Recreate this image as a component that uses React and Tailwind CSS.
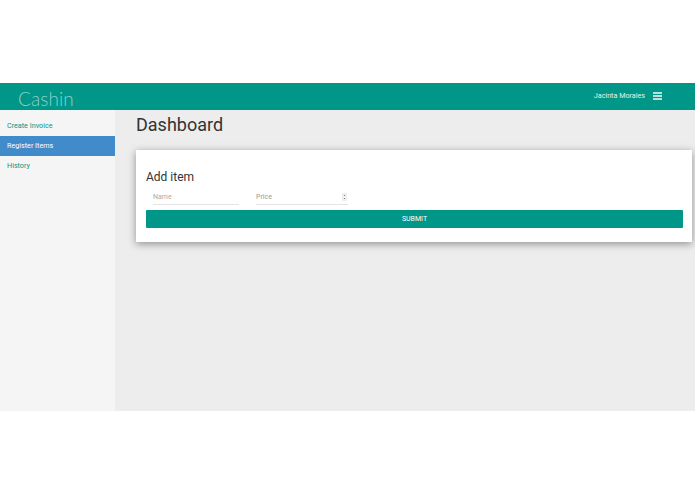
import React from 'react';

function Header() {
  return (
    <header className="h-[27px] bg-[#009688] flex items-center justify-between">
      <div className="pl-[18px] pt-[3px] font-['Lato'] font-light text-[19px] leading-none tracking-[0.1px] text-[#8fd0c8]">
        Cashin
      </div>
      <div className="flex items-center pr-[33px]">
        <span className="text-[7.2px] text-[#e3f4f1]">Jacinta Morales</span>
        <svg className="ml-[8px]" width="9" height="8" viewBox="0 0 9 8">
          <path d="M0 1h9M0 4h9M0 7h9" stroke="#f2faf9" strokeWidth="1.3" />
        </svg>
      </div>
    </header>
  );
}

function Sidebar() {
  return (
    <aside className="w-[115px] bg-[#f5f5f5] text-[7.2px]">
      <div className="h-[26px] pt-[7px] px-[7px] flex items-center text-[#009688]">Create Invoice</div>
      <div className="h-[20px] px-[7px] flex items-center bg-[#428bca] text-white">Register Items</div>
      <div className="h-[20px] px-[7px] flex items-center text-[#009688]">History</div>
    </aside>
  );
}

function AddItemCard() {
  return (
    <section className="bg-white shadow-[0_2px_8px_rgba(0,0,0,0.4)] pl-[10px] pr-[9px] pt-[20px] pb-[14px]">
      <h2 className="text-[12px] leading-[15px] text-[#333]">Add item</h2>
      <form className="mt-[2px]">
        <div className="flex gap-[17px] px-[7px]">
          <div className="w-[86px] h-[18px] pt-[3px] border-b border-[#e4e4e4] flex items-center text-[7px] text-[#aaa]">Name</div>
          <div className="w-[92px] h-[18px] pt-[3px] border-b border-[#e4e4e4] flex items-center justify-between text-[7px] text-[#999]">
            <span>Price</span>
            <svg width="5" height="8" viewBox="0 0 5 8" className="mr-[1px]">
              <rect x="0.25" y="0.25" width="4.5" height="7.5" rx="1.5" fill="#f4f4f4" stroke="#ddd" strokeWidth="0.5" />
              <path d="M1.5 3 2.5 1.8 3.5 3zM1.5 5 2.5 6.2 3.5 5z" fill="#777" />
            </svg>
          </div>
        </div>
        <button type="button" className="mt-[5px] w-full h-[18px] bg-[#009688] text-white text-[7px] rounded-[1px] flex items-center justify-center">
          SUBMIT
        </button>
      </form>
    </section>
  );
}

export default function App() {
  return (
    <div className="w-[695px] h-[494px] bg-white pt-[83px] font-['Roboto',sans-serif]">
      <Header />
      <div className="flex h-[301px]">
        <Sidebar />
        <main className="flex-1 bg-[#ededed] pl-[21px] pr-[3px]">
          <h1 className="h-[40px] pt-[3px] text-[18px] leading-[24px] text-[#333]">Dashboard</h1>
          <AddItemCard />
        </main>
      </div>
    </div>
  );
}
